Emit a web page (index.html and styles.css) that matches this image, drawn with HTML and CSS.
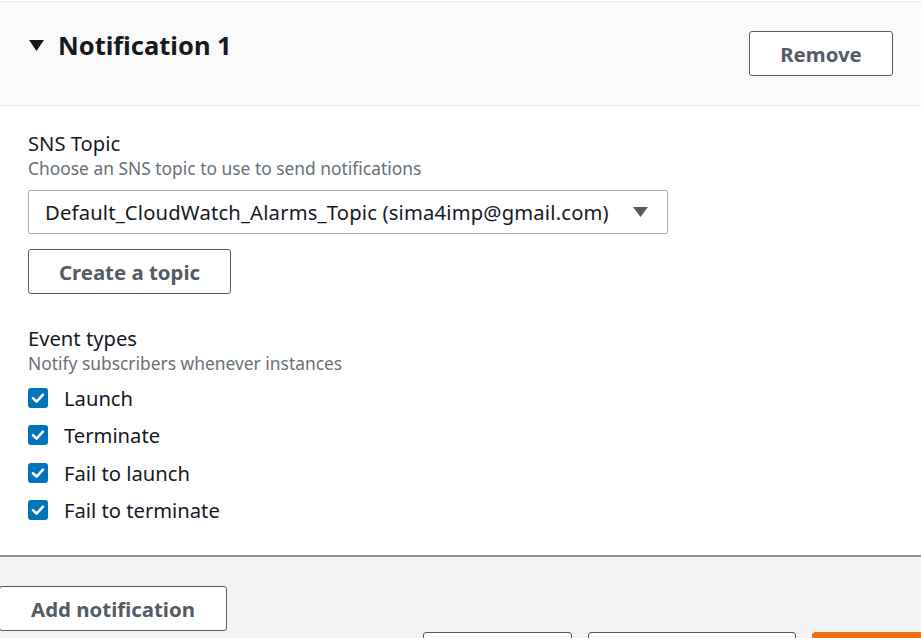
FILE: index.html
```html
<!DOCTYPE html>
<html lang="en">
<head>
<meta charset="utf-8">
<title>Notification</title>
<link rel="stylesheet" href="styles.css">
</head>
<body>
<div class="page">
  <section class="panel">
    <header class="panel-header">
      <h2 class="panel-title">
        <svg class="caret-down" width="15" height="11" viewBox="0 0 15 11"><path d="M0 0H15L7.5 11Z" fill="#16191f"/></svg>
        <span>Notification 1</span>
      </h2>
      <button class="btn btn-remove">Remove</button>
    </header>
    <div class="panel-body">
      <div class="field">
        <div class="label">SNS Topic</div>
        <div class="desc">Choose an SNS topic to use to send notifications</div>
        <div class="select">
          <span class="select-value">Default_CloudWatch_Alarms_Topic (sima4imp@gmail.com)</span>
          <svg width="15" height="10" viewBox="0 0 15 10"><path d="M0 0H15L7.5 10Z" fill="#545b64"/></svg>
        </div>
        <button class="btn btn-topic">Create a topic</button>
      </div>
      <div class="field field-events">
        <div class="label">Event types</div>
        <div class="desc">Notify subscribers whenever instances</div>
        <ul class="checks">
          <li class="check"><span class="box"><svg width="20" height="20" viewBox="0 0 20 20"><path d="M5 10.2L8.6 13.6L15 6.6" fill="none" stroke="#fff" stroke-width="2.6" stroke-linecap="round" stroke-linejoin="round"/></svg></span>Launch</li>
          <li class="check"><span class="box"><svg width="20" height="20" viewBox="0 0 20 20"><path d="M5 10.2L8.6 13.6L15 6.6" fill="none" stroke="#fff" stroke-width="2.6" stroke-linecap="round" stroke-linejoin="round"/></svg></span>Terminate</li>
          <li class="check"><span class="box"><svg width="20" height="20" viewBox="0 0 20 20"><path d="M5 10.2L8.6 13.6L15 6.6" fill="none" stroke="#fff" stroke-width="2.6" stroke-linecap="round" stroke-linejoin="round"/></svg></span>Fail to launch</li>
          <li class="check"><span class="box"><svg width="20" height="20" viewBox="0 0 20 20"><path d="M5 10.2L8.6 13.6L15 6.6" fill="none" stroke="#fff" stroke-width="2.6" stroke-linecap="round" stroke-linejoin="round"/></svg></span>Fail to terminate</li>
        </ul>
      </div>
    </div>
  </section>
  <footer class="footer">
    <button class="btn btn-add">Add notification</button>
    <div class="actions">
      <button class="btn btn-a">Cancel</button>
      <button class="btn btn-b">Skip to review</button>
      <button class="btn btn-primary">Next</button>
    </div>
  </footer>
</div>
</body>
</html>
```

FILE: styles.css
```css
* { box-sizing: border-box; }
html, body { margin: 0; padding: 0; }
body {
  width: 921px;
  height: 638px;
  overflow: hidden;
  background: #f2f3f3;
  font-family: "Noto Sans", "Open Sans", Arial, sans-serif;
  color: #16191f;
}
.page { width: 921px; }
.panel {
  background: #fff;
  padding-top: 1px;
  border-bottom: 2px solid #879596;
}
.panel-header {
  background: #fafafa;
  border-top: 1px solid #eaeded;
  border-bottom: 1px solid #eaeded;
  height: 105px;
  display: flex;
  justify-content: space-between;
  align-items: flex-start;
  padding: 27px 28px 0 29px;
}
.panel-title {
  margin: 0;
  display: flex;
  align-items: center;
  gap: 14px;
  font-size: 25.5px;
  font-weight: 700;
  line-height: 32px;
}
.btn {
  font-family: inherit;
  font-weight: 700;
  font-size: 20.4px;
  color: #545b64;
  background: #fff;
  border: 1px solid #545b64;
  border-radius: 3px;
  height: 45px;
  padding: 0;
  cursor: pointer;
}
.btn-remove { width: 144px; margin-top: 2px; }
.panel-body { padding: 23px 28px 26px 28px; }
.label { font-size: 20.2px; line-height: 28px; }
.desc { font-size: 17.4px; line-height: 22px; color: #687078; }
.select {
  margin-top: 11px;
  width: 640px;
  height: 44px;
  border: 1px solid #aab7b8;
  border-radius: 2px;
  display: flex;
  align-items: center;
  justify-content: space-between;
  padding: 0 19px 0 16px;
  font-size: 20.2px;
}
.select-value { letter-spacing: 0.19px; }
.btn-topic { margin-top: 15px; width: 203px; }
.field-events { margin-top: 30px; }
.checks { list-style: none; margin: 5px 0 0; padding: 0; }
.check {
  display: flex;
  align-items: center;
  gap: 16px;
  height: 37.5px;
  font-size: 20.2px;
}
.box {
  width: 20px;
  height: 20px;
  border-radius: 3px;
  background: #0073bb;
  display: flex;
}
.footer { padding-top: 29px; }
.btn-add { margin-left: -1px; width: 228px; }
.actions {
  display: flex;
  gap: 16px;
  padding-left: 423px;
  margin-top: 1px;
}
.btn-a { width: 149px; flex: none; }
.btn-b { width: 208px; flex: none; }
.btn-primary {
  flex: none;
  width: 130px;
  background: #ec7211;
  border-color: #ec7211;
  color: #fff;
}
```
